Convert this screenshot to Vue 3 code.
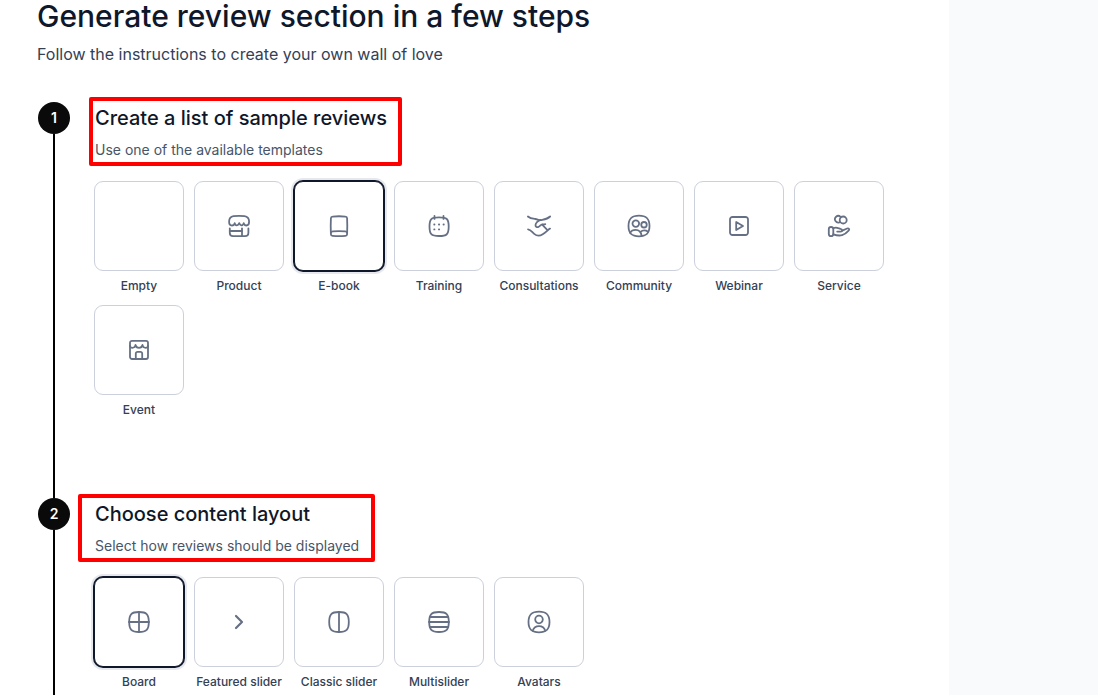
<template>
  <div class="page">
    <main class="content">
      <h1 class="title">Generate review section in a few steps</h1>
      <p class="lead">Follow the instructions to create your own wall of love</p>

      <section v-for="(step, index) in steps" :key="step.title" class="step">
        <div class="rail">
          <span class="number">{{ index + 1 }}</span>
        </div>
        <div class="body">
          <header class="head">
            <h2>{{ step.title }}</h2>
            <p>{{ step.text }}</p>
            <span class="mark" :class="'mark-' + (index + 1)"></span>
          </header>
          <div class="options">
            <div
              v-for="option in step.options"
              :key="option.name"
              class="option"
              @click="selected[index] = option.name"
            >
              <div class="tile" :class="{ active: selected[index] === option.name }">
                <svg v-if="option.icon" viewBox="0 0 24 24" :class="{ bold: option.bold }">
                  <path v-for="d in option.icon" :key="d" :d="d" />
                </svg>
              </div>
              <span class="label">{{ option.name }}</span>
            </div>
          </div>
        </div>
      </section>
    </main>
  </div>
</template>

<script setup>
import { ref } from "vue";

const selected = ref(["E-book", "Board"]);

const squircle =
  "M12 2C4.5 2 2.200 4.300 2.200 12s2.300 10 9.800 10 9.800-2.300 9.800-10S19.500 2 12 2z";

const steps = [
  {
    title: "Create a list of sample reviews",
    text: "Use one of the available templates",
    options: [
      { name: "Empty" },
      {
        name: "Product",
        icon: [
          "M6.500 2.200C3.800 2.600 2.100 4.800 2.100 7.800c0 2.400 1 3.700 2.800 3.700 1.600 0 2.500-.9 2.800-2.300.5 1.400 1.200 2.100 2.200 2.100s1.700-.7 2.300-2.100c.6 1.400 1.300 2.100 2.300 2.100s1.700-.7 2.200-2.100c.5 1.400 1.300 2.300 2.600 2.300 1.700 0 2.800-1.300 2.800-3.700 0-3-1.800-5.200-4.600-5.600Q12 1.500 6.500 2.200z",
          "M2.800 14.300v4.700c0 2.200 1 3.200 3.200 3.200h12c2.400 0 3.400-1 3.400-3.400v-4.500",
          "M2.800 17H15",
          "M15 14.300v7.700",
        ],
      },
      {
        name: "E-book",
        icon: [
          "M5.500 2.600Q12 1.900 18.500 2.600 20 2.700 20.100 4.200 20.500 12 20.100 20.200 20 21.800 18.500 21.900 12 22.500 5.500 21.900 4 21.800 3.900 20.200 3.500 12 3.900 4.200 4 2.700 5.500 2.600z",
          "M4 18.800q.1-1.200 1.700-1.400 6.300-.7 12.600 0 1.600.2 1.700 1.400",
        ],
      },
      {
        name: "Training",
        icon: [
          "M12 3.300C4.200 3.300 2.500 4.800 2.500 12.600S4.200 22 12 22s9.700-1.600 9.700-9.400S19.800 3.300 12 3.300z",
          "M7.500 1.900v3",
          "M16.500 1.900v3",
          "M7.200 10.500h.3",
          "M11.900 10.500h.3",
          "M16.500 10.500h.3",
          "M7.200 15.400h.3",
          "M11.900 15.400h.3",
        ],
      },
      {
        name: "Consultations",
        icon: [
          "M.9 2.500c2.300 2.100 4.600 2.200 7.500 2.500 2 .2 3.700 1.500 5.800 1.100 3.500-.7 6.300-1 8.900-3.600",
          "M13.500 6c-2.200.3-4.900 2.900-5 5-.1 1.900 1.600 2.700 3.200 1.800 1.500-.8 2-2.300 3.600-2.400 1.400.2 2.500 0 3-.2",
          "M15.200 10.600l5 5.200",
          "M1 15.300c3 .3 3.900 2.600 6.200 4.600 2.600 2.200 6 2 8.500.4 3-1.900 4.700-3.900 7.300-5.700",
        ],
      },
      {
        name: "Community",
        icon: [
          "M12 1.700C4.500 1.700 1.500 4.500 1.500 12S4.500 22.300 12 22.300 22.500 19.500 22.500 12 19.500 1.700 12 1.700z",
          "M8.800 6.300a3.300 3.300 0 1 0 0 6.600 3.300 3.300 0 0 0 0-6.600z",
          "M17 8a2.700 2.700 0 1 0 0 5.500 2.700 2.700 0 0 0 0-5.500z",
          "M3 18.700c1.200-2 3.200-2.900 5.700-2.900 3.100 0 5.300 2 6 6",
          "M13.600 17.800c1.900-1.800 5.200-1.700 7.500-.1",
        ],
      },
      {
        name: "Webinar",
        icon: [
          "M5.500 3h13A2.500 2.500 0 0 1 21 5.500v13a2.500 2.500 0 0 1-2.500 2.500h-13A2.500 2.500 0 0 1 3 18.500v-13A2.500 2.500 0 0 1 5.500 3z",
          "M9.200 8v8l6.800-4z",
        ],
      },
      {
        name: "Service",
        icon: [
          "M12.700 8.200a3.300 3.300 0 1 1 .7-5.500",
          "M16.200 2.500a3.500 3.500 0 1 0 0 7 3.500 3.500 0 0 0 0-7z",
          "M4 13c1.600 0 2.300.4 2.300 2v5c0 1.600-.7 2.200-2.300 2.200s-2.200-.6-2.200-2.200v-5c0-1.600.6-2 2.200-2z",
          "M6.300 14.300c1.500-.7 3.300-.8 5-.1l2.200.7c2.300.5 2.200 2.700 0 2.800l-3.300-.1",
          "M15.300 16.600l4.800-2.100c1.600-.6 2.900.7 1.500 2.100-2.100 2.300-4.100 4-6.500 4.600-3 .7-5.900.2-8.800-.9",
        ],
      },
      {
        name: "Event",
        icon: [
          "M5 2.800h14a2 2 0 0 1 2 2V19a2 2 0 0 1-2 2H5a2 2 0 0 1-2-2V4.800a2 2 0 0 1 2-2z",
          "M3 7.800c.2 1.400 1 2 2.300 2 1.700 0 3-1.100 3.200-2.800.4 1.800 1.700 2.800 3.500 2.800s3.100-1 3.500-2.800c.2 1.700 1.500 2.800 3.200 2.800 1.300 0 2.100-.6 2.300-2",
          "M8.800 21v-5.500a1.700 1.700 0 0 1 1.700-1.700h3a1.700 1.700 0 0 1 1.700 1.700V21",
        ],
      },
    ],
  },
  {
    title: "Choose content layout",
    text: "Select how reviews should be displayed",
    options: [
      { name: "Board", icon: [squircle, "M12 2v20", "M2 12h20"] },
      { name: "Featured slider", icon: ["M9 6l6 6-6 6"], bold: true },
      { name: "Classic slider", icon: [squircle, "M12 2v20"] },
      { name: "Multislider", icon: [squircle, "M2.800 7h18.400", "M2 12h20", "M2.800 17h18.400"] },
      {
        name: "Avatars",
        icon: [
          "M12 1.700C4.500 1.700 1.500 4.500 1.500 12S4.500 22.300 12 22.300 22.500 19.500 22.500 12 19.500 1.700 12 1.700z",
          "M12 5.700a3.800 3.800 0 1 0 0 7.600 3.800 3.800 0 0 0 0-7.600z",
          "M5.700 20.800c1-3.200 3.300-4.700 6.300-4.700s5.300 1.500 6.300 4.700",
        ],
      },
    ],
  },
];
</script>

<style>
body {
  background: #f8fafc;
  overflow: hidden;
}
</style>

<style scoped>
* {
  margin: 0;
  padding: 0;
  box-sizing: border-box;
}
.page {
  height: 695px;
  overflow: hidden;
  background: #f8fafc;
  font-family: Inter, sans-serif;
}
.content {
  width: 949px;
  height: 695px;
  padding-left: 37px;
  background: #fff;
  overflow: hidden;
}
.title {
  height: 42px;
  font-size: 30px;
  line-height: 32px;
  font-weight: 500;
  color: #0f172a;
}
.lead {
  height: 60px;
  font-size: 16px;
  line-height: 25px;
  color: #334155;
}
.step {
  display: flex;
  height: 396px;
}
.rail {
  width: 34px;
  display: flex;
  flex-direction: column;
  align-items: center;
}
.rail::after {
  content: "";
  flex: 1;
  width: 2px;
  background: #000;
}
.number {
  width: 32px;
  height: 32px;
  border-radius: 50%;
  background: #0a0a0a;
  color: #fff;
  font-size: 14px;
  line-height: 32px;
  font-weight: 600;
  text-align: center;
}
.body {
  padding-left: 23px;
}
.head {
  position: relative;
  height: 79px;
  padding-left: 1px;
}
.head h2 {
  font-size: 20px;
  line-height: 32px;
  font-weight: 500;
  color: #0f172a;
}
.head p {
  padding-top: 6px;
  font-size: 14px;
  line-height: 20px;
  color: #475569;
}
.mark {
  position: absolute;
  border: 4px solid #f00;
  border-radius: 2px;
}
.mark-1 {
  left: -5px;
  top: -5px;
  width: 313px;
  height: 69px;
}
.mark-2 {
  left: -16px;
  top: -4px;
  width: 297px;
  height: 68px;
}
.options {
  display: flex;
  flex-wrap: wrap;
  gap: 10px;
  width: 800px;
}
.option {
  width: 90px;
  height: 114px;
  cursor: pointer;
}
.tile {
  display: flex;
  align-items: center;
  justify-content: center;
  height: 90px;
  border: 1px solid #cbd0dc;
  border-radius: 9px;
  background: #fff;
}
.tile.active {
  border-color: #0f172a;
  box-shadow: 0 0 0 1px #0f172a, 0 0 0 3px #e6e8ee;
}
.tile svg {
  width: 24px;
  height: 24px;
  fill: none;
  stroke: #667085;
  stroke-width: 1.8;
  stroke-linecap: round;
  stroke-linejoin: round;
}
.tile svg.bold {
  stroke-width: 2.2;
}
.label {
  display: flex;
  justify-content: center;
  margin-top: 5px;
  font-size: 12px;
  line-height: 20px;
  font-weight: 500;
  color: #334155;
  white-space: nowrap;
}
</style>
